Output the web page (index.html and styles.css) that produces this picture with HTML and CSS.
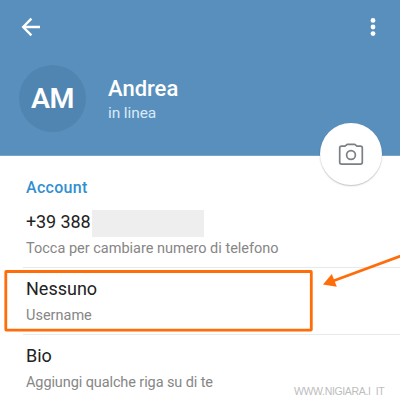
FILE: index.html
```
<!DOCTYPE html>
<html lang="it">
<head>
<meta charset="utf-8">
<title>Account</title>
<link rel="stylesheet" href="styles.css">
</head>
<body>
<div class="screen">
  <header class="header">
    <div class="toolbar">
      <svg class="back" width="20" height="20" viewBox="0 0 20 20"><path d="M19 10H2.5M10.4 1.7L2.2 10l8.2 8.3"/></svg>
      <svg class="more" width="6" height="20" viewBox="0 0 6 20"><circle cx="3" cy="3.4" r="2.4"/><circle cx="3" cy="10" r="2.4"/><circle cx="3" cy="16.6" r="2.4"/></svg>
    </div>
    <div class="profile">
      <div class="avatar">AM</div>
      <div class="identity">
        <div class="name">Andrea</div>
        <div class="status">in linea</div>
      </div>
    </div>
    <div class="fab">
      <svg width="26" height="24" viewBox="0 0 26 24"><path d="M3.6 4.2H7l1.5-1.4q.4-.4 1-.4h7q.6 0 1 .4L19 4.2h3.4q1.9 0 1.9 1.9v14.2q0 1.9-1.9 1.9H3.6q-1.9 0-1.9-1.9V6.1q0-1.9 1.9-1.9z"/><circle cx="13" cy="13" r="4.4"/></svg>
    </div>
  </header>
  <main class="account">
    <h2 class="section">Account</h2>
    <div class="row first">
      <div class="value number">+39 388<span class="redacted"></span></div>
      <div class="label">Tocca per cambiare numero di telefono</div>
    </div>
    <div class="row">
      <div class="value">Nessuno</div>
      <div class="label">Username</div>
    </div>
    <div class="row">
      <div class="value">Bio</div>
      <div class="label bio">Aggiungi qualche riga su di te</div>
    </div>
  </main>
  <svg class="annotation" width="400" height="400" viewBox="0 0 400 400"><rect x="5.8" y="271.5" width="305.5" height="58.6" rx=".5"/><path d="M402 255.4L333 281"/><path class="head" d="M323 284.4L331.8 274L336.8 286.8z"/></svg>
  <div class="watermark">WWW.NIGIARA.I&nbsp; IT</div>
</div>
</body>
</html>
```
FILE: styles.css
```
* { box-sizing: border-box; }
body { margin: 0; background: #fff; font-family: Roboto, "Liberation Sans", sans-serif; }
.screen { position: relative; width: 400px; height: 400px; overflow: hidden; }
.header { position: relative; height: 156px; background: #598fbc; border-bottom: 1px solid #78a3c6; }
.toolbar { display: flex; justify-content: space-between; align-items: center; height: 54px; padding: 0 24px 0 21px; }
.back { fill: none; stroke: #fff; stroke-width: 2.4; }
.more { fill: #fff; }
.profile { display: flex; align-items: flex-start; gap: 22px; padding: 11px 0 0 19px; }
.avatar { width: 67px; height: 67px; border-radius: 50%; background: #5085b1; color: #fff; font-size: 28.5px; font-weight: 600; letter-spacing: -.5px; line-height: 67px; text-align: center; }
.identity { padding-top: 11px; }
.name { color: #fff; font-size: 22px; font-weight: 500; line-height: 26px; }
.status { color: #d7eafa; font-size: 15.5px; letter-spacing: -.1px; line-height: 20px; margin-top: 1px; }
.fab { position: absolute; left: 320px; top: 123px; width: 62px; height: 62px; border-radius: 50%; background: #fff; box-shadow: 0 1px 1.5px rgba(0, 0, 0, .25); display: flex; align-items: center; justify-content: center; }
.fab svg { fill: none; stroke: #7b8084; stroke-width: 1.7; }
.account { padding: 22px 0 0 26px; }
.section { margin: 0; color: #328fd2; font-size: 16px; font-weight: 500; letter-spacing: .3px; line-height: 20px; }
.row { height: 67px; padding-top: 9px; margin-left: -3px; padding-left: 3px; border-top: 1px solid #e8e9ea; }
.row.first { height: 69px; padding-top: 12px; border-top: 0; }
.value { display: flex; height: 24px; color: #222; font-size: 18px; line-height: 24px; }
.number { letter-spacing: -.12px; }
.redacted { width: 112px; height: 27px; margin: 0 0 -3px 2px; background: #eee; }
.label { color: #868686; font-size: 14.5px; line-height: 20px; margin-top: 5px; }
.label.bio { letter-spacing: -.1px; }
.annotation { position: absolute; left: 0; top: 0; fill: none; stroke: #ff6d0a; stroke-width: 2.8; }
.annotation .head { fill: #ff6d0a; stroke: none; }
.watermark { position: absolute; left: 294px; top: 384px; color: #bdbdbd; font: 10.5px/14px "Liberation Sans", sans-serif; letter-spacing: -.35px; white-space: nowrap; }
```
